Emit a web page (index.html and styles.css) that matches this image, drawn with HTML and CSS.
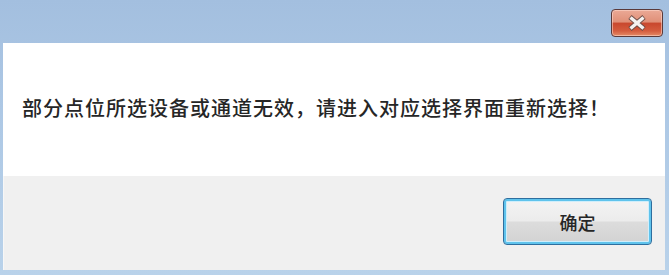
FILE: index.html
```html
<!DOCTYPE html>
<html lang="zh-CN">
<head>
<meta charset="utf-8">
<title>提示</title>
<link rel="stylesheet" href="styles.css">
</head>
<body>
<div class="window">
  <div class="titlebar">
    <div class="close-btn">
      <svg class="close-x" width="22" height="16" viewBox="0 0 22 16">
        <path d="M4 2 L18 14 M18 2 L4 14" stroke="#6b4b45" stroke-width="5" stroke-linecap="butt" fill="none"/>
        <path d="M4.5 2.5 L17.5 13.5 M17.5 2.5 L4.5 13.5" stroke="#f4f1ef" stroke-width="3.4" stroke-linecap="butt" fill="none"/>
      </svg>
    </div>
  </div>
  <div class="client">
    <div class="content">
      <p class="message">部分点位所选设备或通道无效，请进入对应选择界面重新选择！</p>
    </div>
    <div class="footer">
      <button class="ok-btn">确定</button>
    </div>
  </div>
</div>
</body>
</html>
```
FILE: styles.css
```css
html, body {
  margin: 0;
  padding: 0;
}
body {
  width: 669px;
  height: 275px;
  overflow: hidden;
  font-family: "Noto Sans CJK SC", "Noto Sans", sans-serif;
}
.window {
  width: 669px;
  height: 275px;
  display: flex;
  flex-direction: column;
  background: linear-gradient(180deg, #a3bfdf 0%, #adc8e5 40%, #b9d2ea 100%);
  box-sizing: border-box;
}
.titlebar {
  height: 43px;
  flex: none;
  display: flex;
  justify-content: flex-end;
  align-items: flex-start;
  padding: 9px 6px 0 0;
  box-sizing: border-box;
}
.close-btn {
  width: 52px;
  height: 28px;
  box-sizing: border-box;
  border: 1px solid #5a3a3a;
  border-radius: 4px;
  background: linear-gradient(180deg, #eba996 0%, #e09078 45%, #c9482e 52%, #d45c3e 80%, #e48b66 100%);
  box-shadow: inset 0 0 0 1px rgba(255, 220, 210, 0.55);
  display: flex;
  align-items: center;
  justify-content: center;
}
.client {
  flex: 1;
  display: flex;
  flex-direction: column;
  margin: 0 4px 0 3px;
}
.content {
  height: 133px;
  flex: none;
  background: #ffffff;
  box-sizing: border-box;
  padding: 52px 0 0 19px;
}
.message {
  margin: 0;
  font-size: 20px;
  line-height: 26px;
  letter-spacing: 1px;
  font-weight: 500;
  color: #262626;
  white-space: nowrap;
}
.footer {
  height: 94px;
  flex: none;
  background: #f0f0f0;
  border-left: 1px solid #f7f7f7;
  display: flex;
  justify-content: flex-end;
  align-items: flex-start;
  padding: 22px 13px 0 0;
  box-sizing: border-box;
}
.ok-btn {
  width: 149px;
  height: 47px;
  box-sizing: border-box;
  border: 1px solid #2e6e9e;
  border-radius: 4px;
  background: linear-gradient(180deg, #f4f4f4 0%, #ececec 48%, #dcdcdc 52%, #d2d2d2 100%);
  box-shadow: inset 0 0 0 2px #5fc3ec, inset 0 0 0 3px #cfeefb;
  font-family: "Noto Sans CJK SC", "Noto Sans", sans-serif;
  font-size: 18px;
  font-weight: 500;
  color: #262626;
  padding: 0;
  cursor: default;
}
```
